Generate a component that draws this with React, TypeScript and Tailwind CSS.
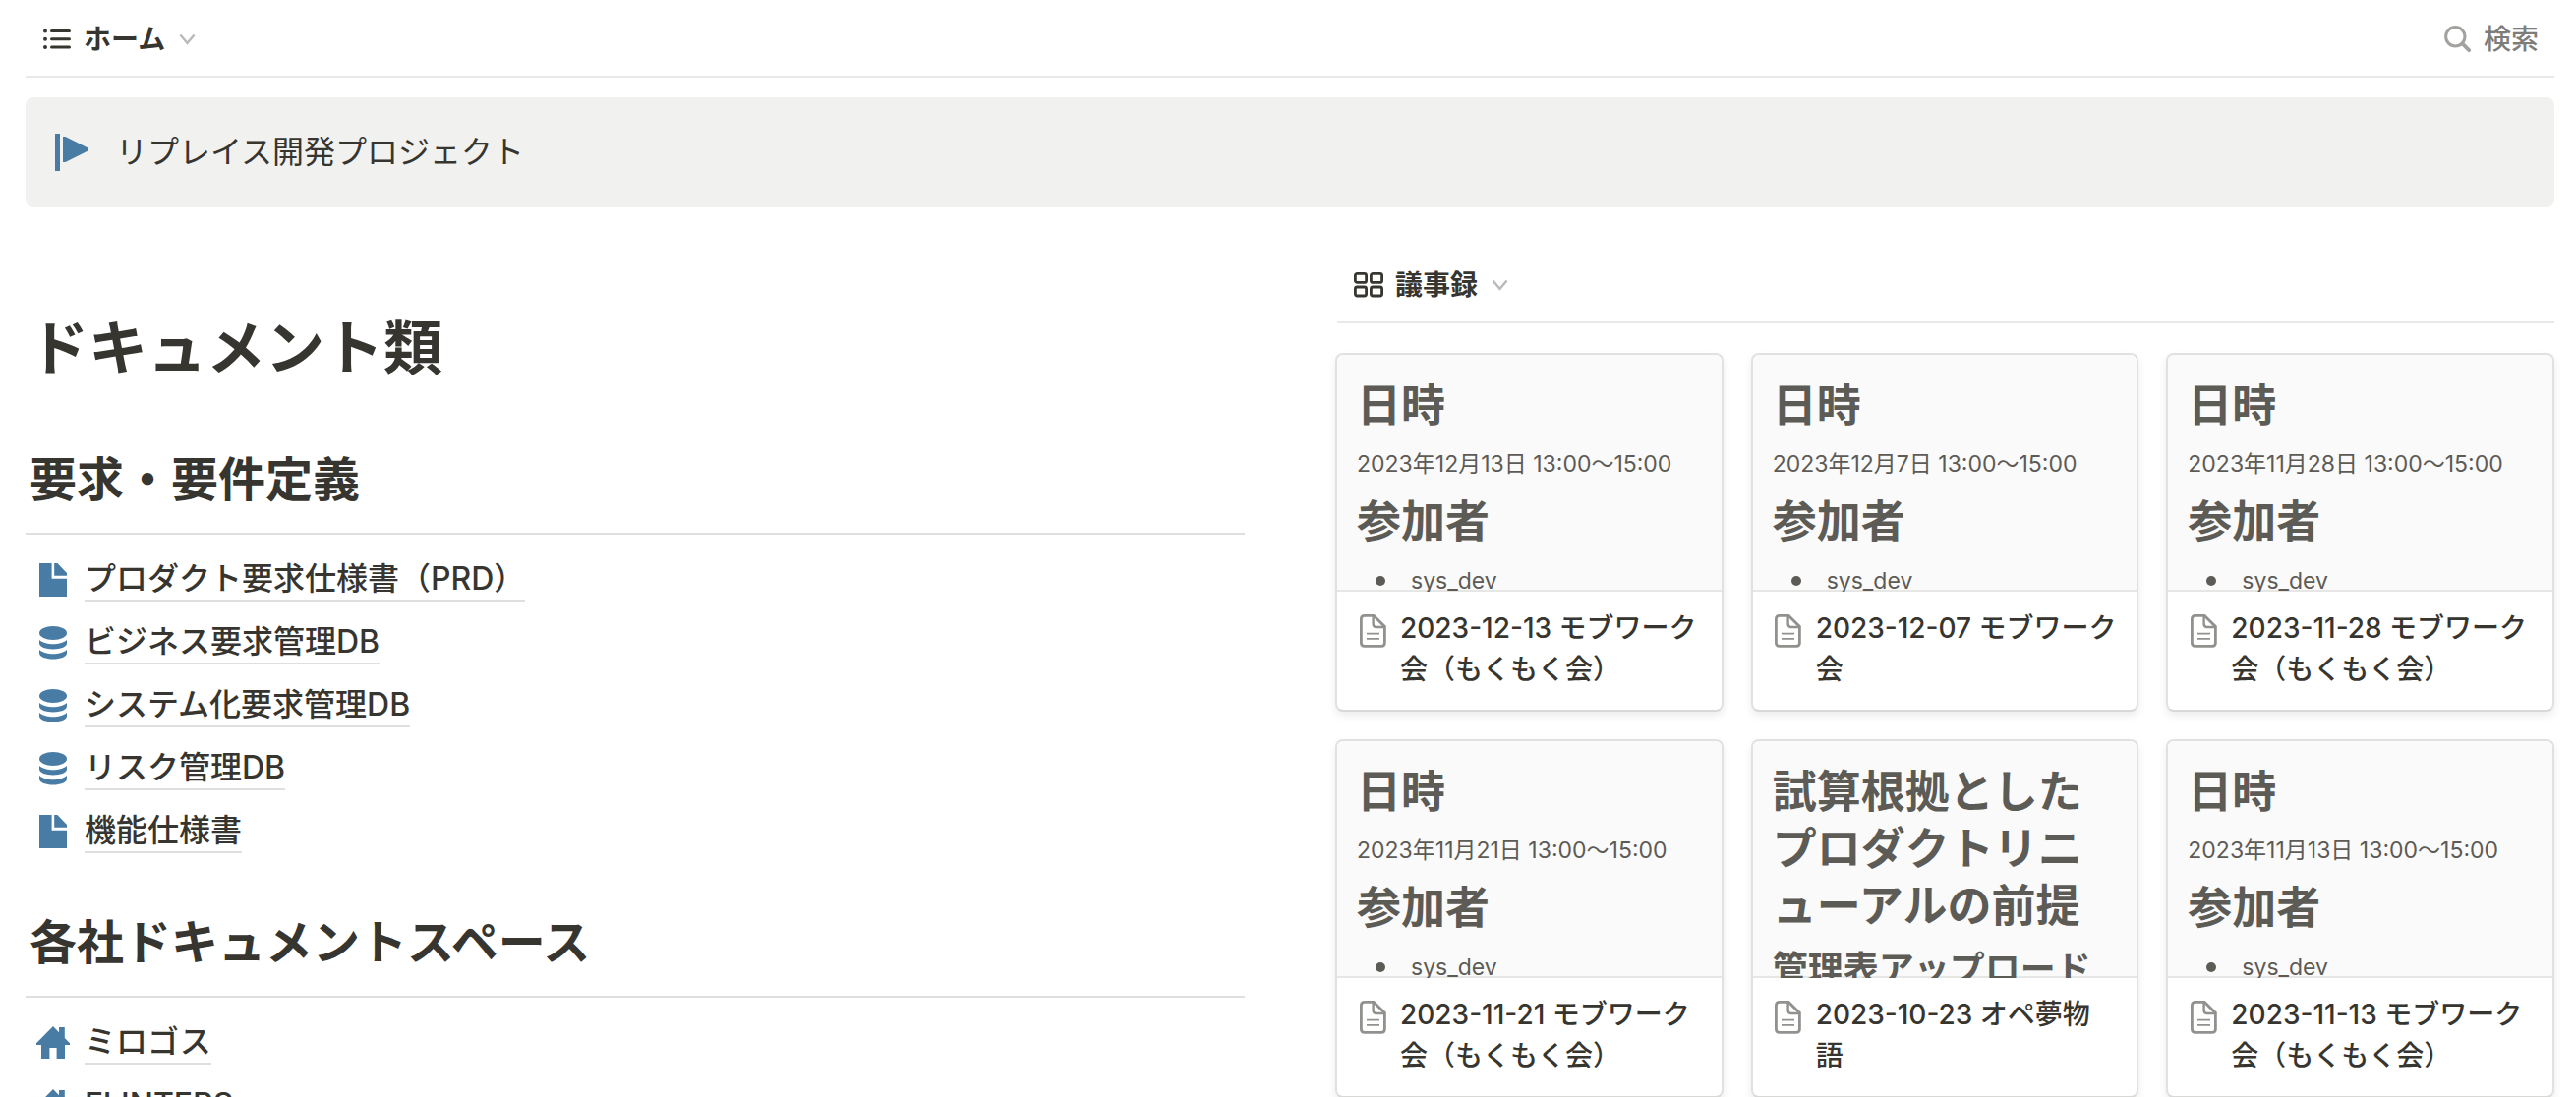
import React from "react";

type IconKind = "page" | "database" | "home";

function ListIcon() {
  return (
    <svg width="28" height="22" viewBox="0 0 28 22" aria-hidden="true">
      <g fill="currentColor">
        <circle cx="2" cy="2.5" r="2" />
        <circle cx="2" cy="10.8" r="2" />
        <circle cx="2" cy="19" r="2" />
      </g>
      <path d="M8.5 2.5H26.5M8.5 10.8H26.5M8.5 19H26.5" stroke="currentColor" strokeWidth="3" strokeLinecap="round" />
    </svg>
  );
}

function GalleryIcon() {
  return (
    <svg width="30" height="26" viewBox="0 0 30 26" fill="none" stroke="currentColor" strokeWidth="2.8" aria-hidden="true">
      <rect x="1.4" y="1.4" width="11.2" height="9" rx="2" />
      <rect x="17.4" y="1.4" width="11.2" height="9" rx="2" />
      <rect x="1.4" y="15" width="11.2" height="9" rx="2" />
      <rect x="17.4" y="15" width="11.2" height="9" rx="2" />
    </svg>
  );
}

function ChevronIcon() {
  return (
    <svg className="text-[#bbbab8]" width="17" height="12" viewBox="0 0 17 12" fill="none" stroke="currentColor" strokeWidth="2.4" aria-hidden="true">
      <path d="M1.4 1.4L8.5 9.8L15.6 1.4" />
    </svg>
  );
}

function SearchIcon() {
  return (
    <svg className="text-[#a3a29f]" width="28" height="28" viewBox="0 0 28 28" fill="none" stroke="currentColor" aria-hidden="true">
      <circle cx="11.3" cy="11.3" r="9.7" strokeWidth="3" />
      <path d="M18.4 18.4L25.2 25.2" strokeWidth="3.8" strokeLinecap="round" />
    </svg>
  );
}

function FlagIcon() {
  return (
    <svg width="34" height="38" viewBox="0 0 34 38" fill="#487ca5" aria-hidden="true">
      <rect x="0" y="0" width="5" height="38" />
      <path d="M8 3H10.5L33 14.2Q34.6 16 33 17.8L10.5 29H8Z" />
    </svg>
  );
}

function LinkIcon({ kind }: { kind: IconKind }) {
  if (kind === "page") {
    return (
      <svg width="28" height="34" viewBox="0 0 28 34" fill="#487ca5" aria-hidden="true">
        <path d="M0 0H12.6V15.7H28V34H0Z" />
        <path d="M15.2 0H18.4L28 10V12.7H15.2Z" />
      </svg>
    );
  }
  if (kind === "database") {
    return (
      <svg width="28" height="34" viewBox="0 0 28 34" fill="#487ca5" aria-hidden="true">
        <ellipse cx="14" cy="7" rx="14" ry="6.9" />
        <path d="M0 14C4 17.4 9 18.2 14 18.2S24 17.4 28 14V17.6C28 21.4 21 23.5 14 23.5S0 21.4 0 17.6Z" />
        <path d="M0 24C4 27.4 9 28.2 14 28.2S24 27.4 28 24V27.6C28 31.4 21 33.6 14 33.6S0 31.4 0 27.6Z" />
      </svg>
    );
  }
  return (
    <svg width="34" height="34" viewBox="0 0 34 34" fill="#487ca5" aria-hidden="true">
      <path d="M17 0L23 6.2V1H28.8V12L34 17.3V19H29V33H20.6V22H13.4V33H5V19H0V17.3Z" />
    </svg>
  );
}

function PageOutlineIcon() {
  return (
    <svg width="27" height="34" viewBox="0 0 27 34" fill="none" stroke="#91918e" aria-hidden="true">
      <path d="M4.8 1.4H14.2L25.4 12.4V29Q25.4 32.4 22 32.4H4.8Q1.4 32.4 1.4 29V4.8Q1.4 1.4 4.8 1.4Z" strokeWidth="2.8" />
      <path d="M13.6 1.8V9.8Q13.6 13 16.8 13H25" strokeWidth="2.4" />
      <path d="M7 19.6H20M7 24.8H20" strokeWidth="1.8" />
    </svg>
  );
}

function ViewTab({ icon, label }: { icon: React.ReactNode; label: string }) {
  return (
    <button type="button" className="flex items-center text-[28px] leading-[42px] font-bold">
      <span className="flex w-[30px] justify-center">{icon}</span>
      <span className="ml-3">{label}</span>
      <span className="ml-3.5">
        <ChevronIcon />
      </span>
    </button>
  );
}

function LinkSection({ title, links }: { title: string; links: { kind: IconKind; label: string }[] }) {
  return (
    <section className="mb-[52px]">
      <h2 className="border-b-2 border-[#dfdfde] px-1 pb-[23px] text-[48px] leading-[62px] font-bold">{title}</h2>
      <ul className="pt-3">
        {links.map((link) => (
          <li key={link.label} className="h-16">
            <a href="#" className="inline-flex h-16 items-center">
              <span className="flex w-14 justify-center pt-1">
                <LinkIcon kind={link.kind} />
              </span>
              <span className="ml-1 border-b-2 border-[#dfdfde] pt-1 text-[32px] leading-[42px] font-medium whitespace-nowrap">
                {link.label}
              </span>
            </a>
          </li>
        ))}
      </ul>
    </section>
  );
}

function MeetingPreview({ date }: { date: string }) {
  return (
    <>
      <h3 className="text-[45px] leading-[58px] font-bold">日時</h3>
      <p className="text-[23px] leading-[36px] whitespace-nowrap">{date} 13:00〜15:00</p>
      <h3 className="text-[45px] leading-[58px] font-bold">参加者</h3>
      <ul className="text-[23px] leading-[38px]">
        <li className="flex items-center">
          <span className="ml-[19px] size-[10px] rounded-full bg-[#5d5b56]" />
          <span className="ml-[26px]">sys_dev</span>
        </li>
      </ul>
    </>
  );
}

function EstimatePreview() {
  return (
    <>
      <h3 className="text-[45px] leading-[58px] font-bold">試算根拠としたプロダクトリニューアルの前提</h3>
      <h4 className="text-[36px] leading-[47px] font-bold whitespace-nowrap">管理表アップロード</h4>
    </>
  );
}

function Card({ title, children }: { title: string; children: React.ReactNode }) {
  return (
    <a href="#" className="block overflow-hidden rounded-lg border-2 border-[#e1e1e0] border-b-[#d8d8d7] bg-white shadow-[0_4px_8px_rgba(15,15,15,0.08)]">
      <div className="h-[241px] overflow-hidden bg-[#fafafa] shadow-[inset_0_-2px_0_#e6e6e5]">
        <div className="flex flex-col gap-3 px-5 pt-[23px] text-[#5d5b56]">{children}</div>
      </div>
      <div className="flex h-[120px] items-start pt-4 pr-3 pl-5">
        <span className="mt-[7px] flex w-8 shrink-0 justify-center">
          <PageOutlineIcon />
        </span>
        <span className="ml-3 text-[28px] leading-[42px] font-medium whitespace-pre-line">{title}</span>
      </div>
    </a>
  );
}

const requirementLinks: { kind: IconKind; label: string }[] = [
  { kind: "page", label: "プロダクト要求仕様書（PRD）" },
  { kind: "database", label: "ビジネス要求管理DB" },
  { kind: "database", label: "システム化要求管理DB" },
  { kind: "database", label: "リスク管理DB" },
  { kind: "page", label: "機能仕様書" },
];

const companyLinks: { kind: IconKind; label: string }[] = [
  { kind: "home", label: "ミロゴス" },
  { kind: "home", label: "FLINTERS" },
];

const cards: { title: string; date?: string }[] = [
  { title: "2023-12-13 モブワーク\n会（もくもく会）", date: "2023年12月13日" },
  { title: "2023-12-07 モブワーク\n会", date: "2023年12月7日" },
  { title: "2023-11-28 モブワーク\n会（もくもく会）", date: "2023年11月28日" },
  { title: "2023-11-21 モブワーク\n会（もくもく会）", date: "2023年11月21日" },
  { title: "2023-10-23 オペ夢物\n語" },
  { title: "2023-11-13 モブワーク\n会（もくもく会）", date: "2023年11月13日" },
];

export default function App() {
  return (
    <div
      lang="ja"
      className="h-screen overflow-hidden bg-white pr-[22px] pl-[26px] font-[Inter,'Noto_Sans_CJK_JP',sans-serif] text-[#37352f]"
    >
      <header className="flex h-[79px] items-center justify-between border-b-2 border-[#e9e9e8] pt-0.5 pr-4 pl-[17px]">
        <ViewTab icon={<ListIcon />} label="ホーム" />
        <button type="button" className="flex items-center gap-3 text-[28px] leading-[42px] font-medium text-[#7d7c78]">
          <SearchIcon />
          検索
        </button>
      </header>

      <div className="mt-5 flex items-center rounded-lg bg-[#f1f1ef] px-[30px] py-8">
        <FlagIcon />
        <p className="ml-7 text-[32px] leading-[48px]">リプレイス開発プロジェクト</p>
      </div>

      <main className="grid grid-cols-2 gap-x-[92px]">
        <div className="pt-[104px]">
          <h1 className="mb-16 px-1 text-[60px] leading-[78px] font-bold">ドキュメント類</h1>
          <LinkSection title="要求・要件定義" links={requirementLinks} />
          <LinkSection title="各社ドキュメントスペース" links={companyLinks} />
        </div>

        <div className="min-w-0 pt-[38px]">
          <div className="ml-0.5 flex h-20 items-center border-b-2 border-[#e9e9e8] pt-1 pl-[17px]">
            <ViewTab icon={<GalleryIcon />} label="議事録" />
          </div>
          <div className="mt-[30px] grid grid-cols-3 gap-7">
            {cards.map((card) => (
              <Card key={card.title} title={card.title}>
                {card.date ? <MeetingPreview date={card.date} /> : <EstimatePreview />}
              </Card>
            ))}
          </div>
        </div>
      </main>
    </div>
  );
}
